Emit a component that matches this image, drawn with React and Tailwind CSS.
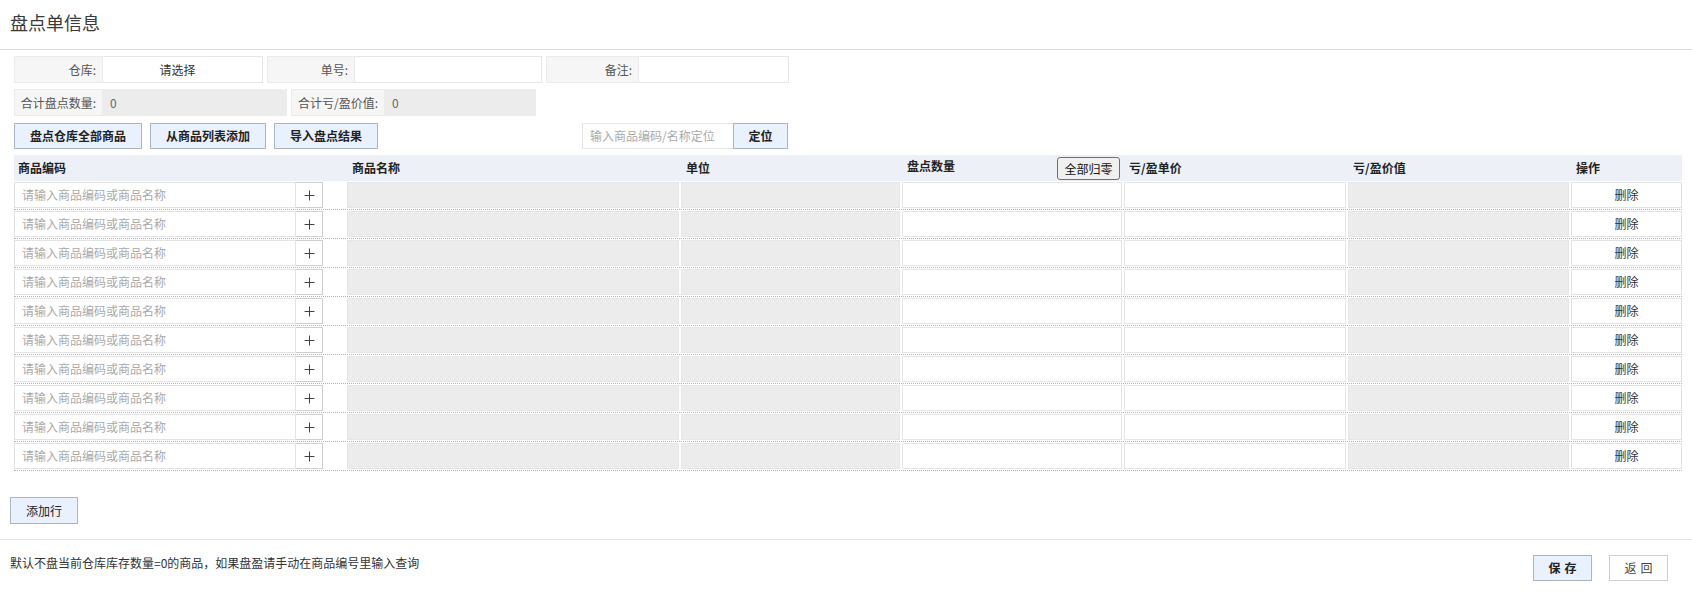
import React from "react";

const FONT = "font-['Noto_Sans_CJK_SC','Microsoft_YaHei',sans-serif]";

function Field({ label, labelW, inputW, value, gray, center }) {
  return (
    <div className="flex h-full">
      <div
        className={`${labelW} bg-[#f6f6f6] border border-[#ebebeb] flex items-center justify-end pr-[6px] text-[#555]`}
      >
        {label}
      </div>
      <div
        className={`${inputW} ${
          gray ? "bg-[#ececec] border-[#ececec]" : "bg-white border-[#e6e6e6]"
        } border border-l-0 flex items-center ${
          center ? "justify-center pr-[10px] text-[#333]" : "pl-[7px] text-[#666]"
        }`}
      >
        {value}
      </div>
    </div>
  );
}

function BlueBtn({ children, w }) {
  return (
    <div
      className={`${w} h-full bg-[#e8f1fd] border border-[#a9b5c5] flex items-center justify-center font-bold text-[#222]`}
    >
      {children}
    </div>
  );
}

function Plus() {
  return (
    <svg width="11" height="11" viewBox="0 0 11 11">
      <path d="M5.5 0.5V10.5M0.5 5.5H10.5" stroke="#444" strokeWidth="1" fill="none" />
    </svg>
  );
}

const GRID = "grid grid-cols-[332px_334px_221px_222px_224px_223px_112px]";

export default function App() {
  const rows = Array.from({ length: 10 });
  return (
    <div className={`w-[1692px] h-[606px] bg-white text-[12px] leading-[14px] text-[#333] ${FONT}`}>
      <div className="h-[50px] border-b border-[#e2e2e2] flex items-center pl-[10px] pb-[6px] text-[18px] leading-[22px] text-[#3a3a3a]">
        盘点单信息
      </div>

      <div className="pl-[14px] pr-[10px]">
        <div className="mt-[6px] flex gap-[4px] h-[27px]">
          <Field label="仓库:" labelW="w-[89px]" inputW="w-[160px]" value="请选择" center />
          <Field label="单号:" labelW="w-[88px]" inputW="w-[187px]" value="" />
          <Field label="备注:" labelW="w-[93px]" inputW="w-[150px]" value="" />
        </div>

        <div className="mt-[6px] flex gap-[4px] h-[27px]">
          <Field label="合计盘点数量:" labelW="w-[89px]" inputW="w-[184px]" value="0" gray />
          <Field label="合计亏/盈价值:" labelW="w-[94px]" inputW="w-[151px]" value="0" gray />
        </div>

        <div className="mt-[7px] flex h-[26px]">
          <div className="flex gap-[8px] h-full">
            <BlueBtn w="w-[128px]">盘点仓库全部商品</BlueBtn>
            <BlueBtn w="w-[116px]">从商品列表添加</BlueBtn>
            <BlueBtn w="w-[104px]">导入盘点结果</BlueBtn>
          </div>
          <div className="ml-[204px] flex h-full">
            <div className="w-[151px] h-full border border-[#e6e6e6] border-r-0 flex items-center pl-[7px] text-[#aaa]">
              输入商品编码/名称定位
            </div>
            <BlueBtn w="w-[55px]">定位</BlueBtn>
          </div>
        </div>

        <div className="mt-[6px] w-[1668px]">
          <div className={`${GRID} h-[26px] bg-[#edf1f7] font-bold text-[#222]`}>
            <div className="flex items-center pl-[4px]">商品编码</div>
            <div className="flex items-center pl-[6px]">商品名称</div>
            <div className="flex items-center pl-[6px]">单位</div>
            <div className="flex justify-between pl-[6px] pr-[3px] pt-[2px]">
              <span className="pt-[2px]">盘点数量</span>
              <div className="w-[63px] h-[23px] rounded-[3px] border border-[#707070] bg-[#f0f0f0] flex items-center justify-center font-normal text-[#111]">
                全部归零
              </div>
            </div>
            <div className="flex items-center pl-[6px]">亏/盈单价</div>
            <div className="flex items-center pl-[6px]">亏/盈价值</div>
            <div className="flex items-center pl-[6px]">操作</div>
          </div>

          {rows.map((_, i) => (
            <div key={i} className={`${GRID} pt-[1px] pb-[1px] border-b border-dotted border-[#b5b5b5]`}>
              <div className="flex h-[26px]">
                <div className="w-[282px] h-full border border-[#e3e3e3] flex items-center pl-[7px] text-[#aaa]">
                  请输入商品编码或商品名称
                </div>
                <div className="w-[27px] h-full border border-l-0 border-[#cfcfcf] bg-white flex items-center justify-center">
                  <Plus />
                </div>
              </div>
              <div className="px-[1px] h-[26px]">
                <div className="h-full bg-[#ececec] border border-[#e6e6e6]" />
              </div>
              <div className="px-[1px] h-[26px]">
                <div className="h-full bg-[#ececec] border border-[#e6e6e6]" />
              </div>
              <div className="px-[1px] h-[26px]">
                <div className="h-full bg-white border border-[#e6e6e6]" />
              </div>
              <div className="px-[1px] h-[26px]">
                <div className="h-full bg-white border border-[#e6e6e6]" />
              </div>
              <div className="px-[1px] h-[26px]">
                <div className="h-full bg-[#ececec] border border-[#e6e6e6]" />
              </div>
              <div className="pl-[1px] h-[26px]">
                <div className="h-full bg-white border border-[#e3e3e3] flex items-center justify-center text-[#333]">
                  删除
                </div>
              </div>
            </div>
          ))}
        </div>
      </div>

      <div className="pl-[10px] mt-[26px]">
        <div className="w-[68px] h-[27px] bg-[#e8f1fd] border border-[#a9b5c5] flex items-center justify-center text-[#222]">
          添加行
        </div>
      </div>

      <div className="mt-[15px] border-t border-[#e2e2e2] flex justify-between items-start pl-[10px] pr-[24px]">
        <div className="mt-[16px] text-[#333]">
          默认不盘当前仓库库存数量=0的商品，如果盘盈请手动在商品编号里输入查询
        </div>
        <div className="mt-[15px] flex gap-[17px]">
          <div className="w-[59px] h-[26px] bg-[#e8f1fd] border border-[#a9b5c5] flex items-center justify-center font-bold text-[#222] tracking-[4px] pl-[4px]">
            保存
          </div>
          <div className="w-[59px] h-[26px] bg-white border border-[#cfcfcf] flex items-center justify-center text-[#444] tracking-[4px] pl-[4px]">
            返回
          </div>
        </div>
      </div>
    </div>
  );
}
